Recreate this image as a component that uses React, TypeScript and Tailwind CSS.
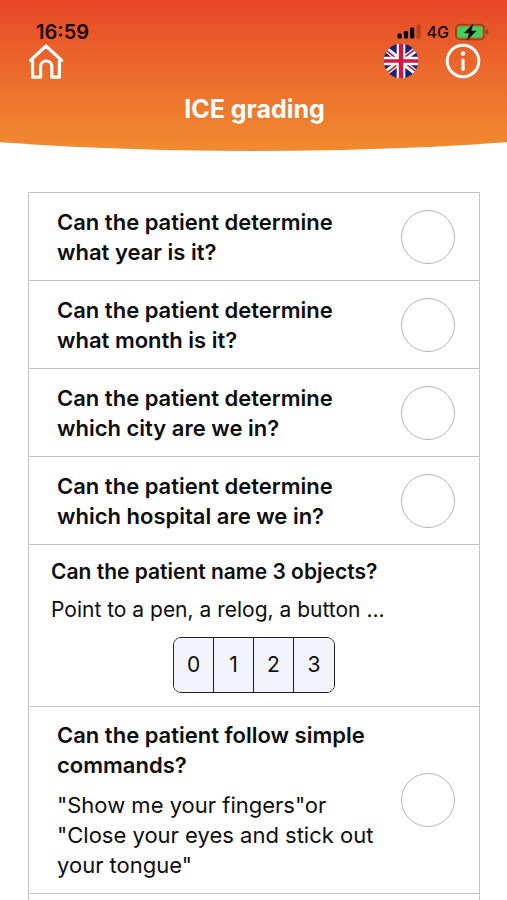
import { useState } from 'react'

/**
 * ICE grading screen
 * ==================
 *
 * Phone status bar, curved header and the list of assessment questions.
 */

interface Question {
    id: string
    title: string
    details?: string[]
    scores?: number[]
}

const QUESTIONS: Question[] = [
    { id: 'year', title: 'Can the patient determine what year is it?' },
    { id: 'month', title: 'Can the patient determine what month is it?' },
    { id: 'city', title: 'Can the patient determine which city are we in?' },
    { id: 'hospital', title: 'Can the patient determine which hospital are we in?' },
    {
        id: 'objects',
        title: 'Can the patient name 3 objects?',
        details: ['Point to a pen, a relog, a button ...'],
        scores: [0, 1, 2, 3],
    },
    {
        id: 'commands',
        title: 'Can the patient follow simple commands?',
        details: ['"Show me your fingers"or', '"Close your eyes and stick out your tongue"'],
    },
]

function HomeIcon() {
    return (
        <svg viewBox="0 0 36 36" className="size-9" fill="none" stroke="currentColor" strokeWidth="3.2" strokeLinecap="round" strokeLinejoin="round">
            <path d="M4.6 17.4H2.4L18 3l15.6 14.4h-2.2V34.2h-7.6V23.6a5.6 5.6 0 0 0-11.2 0v10.6h-8z" />
        </svg>
    )
}

function FlagIcon() {
    return (
        <svg viewBox="0 0 36 36" className="size-9">
            <defs>
                <clipPath id="flag-disc">
                    <circle cx="18" cy="18" r="17.3" />
                </clipPath>
            </defs>
            <g clipPath="url(#flag-disc)">
                <path fill="#14247a" d="M0 0h36v36H0z" />
                <path stroke="#fff" strokeWidth="5.4" d="M0 4l36 28M36 4 0 32" />
                <path stroke="#d3173c" strokeWidth="1.7" d="M-1 4.2 18 19M37 31.8 18 17M37 2.4 18 17.2M-1 33.6 18 18.8" />
                <path stroke="#fff" strokeWidth="8.6" d="M18 0v36M0 18h36" />
                <path stroke="#d3173c" strokeWidth="4.4" d="M18 0v36" />
                <path stroke="#d3173c" strokeWidth="3.6" d="M0 18h36" />
            </g>
        </svg>
    )
}

function InfoIcon() {
    return (
        <svg viewBox="0 0 36 36" className="size-9" fill="none" stroke="currentColor" strokeLinecap="round">
            <circle cx="18" cy="18" r="15.8" strokeWidth="3" />
            <path strokeWidth="3.2" d="M18 17v9.4" />
            <circle cx="18" cy="10.6" r="2.3" fill="currentColor" stroke="none" />
        </svg>
    )
}

function SignalIcon() {
    return (
        <svg viewBox="0 0 24 16" className="h-4 w-6">
            <rect x="0.5" y="9.5" width="4.2" height="5" rx="1.2" />
            <rect x="6.9" y="7" width="4.2" height="7.5" rx="1.2" />
            <rect x="13.1" y="3.6" width="4.2" height="10.9" rx="1.2" />
            <rect x="19.5" y="0.5" width="4.2" height="14" rx="1.2" opacity="0.22" />
        </svg>
    )
}

function BatteryIcon() {
    return (
        <svg viewBox="0 0 34 18" className="h-[18px] w-[34px]">
            <rect x="0.9" y="1.6" width="28.4" height="14.8" rx="4" fill="none" stroke="#8a4a16" strokeWidth="1.6" />
            <rect x="2.8" y="3.5" width="24.6" height="11" rx="2" fill="#3fcf5e" />
            <path fill="#8a4a16" d="M31 6.2c1.6.5 2.4 1.5 2.4 2.8s-.8 2.3-2.4 2.8z" />
            <path fill="#160a04" stroke="#160a04" strokeWidth="0.6" strokeLinejoin="round" d="M17.8 1.2 9.4 9.9h5L12.4 16.9 21 8.1h-5z" />
        </svg>
    )
}

function Header() {
    return (
        <header className="bg-linear-to-b from-[#e64627] to-[#f08b30] pt-[22px] pr-[26px] pb-[27px] pl-7 [clip-path:ellipse(150%_100%_at_50%_0)]">
            {/* Phone status bar */}
            <div className="flex h-5 items-center justify-between pl-2 text-[#140503]">
                <span className="text-xl leading-5 font-semibold">16:59</span>
                <div className="-mr-2 flex items-center gap-1.5">
                    <SignalIcon />
                    <span className="text-base leading-5 font-medium">4G</span>
                    <BatteryIcon />
                </div>
            </div>

            {/* Navigation */}
            <nav className="mt-px flex items-center justify-between text-white">
                <button type="button" aria-label="Home">
                    <HomeIcon />
                </button>
                <div className="flex items-center gap-[26px]">
                    <button type="button" aria-label="Language">
                        <FlagIcon />
                    </button>
                    <button type="button" aria-label="Information">
                        <InfoIcon />
                    </button>
                </div>
            </nav>

            <h1 className="mt-[15px] text-center text-[25px] leading-[30px] font-bold text-white">ICE grading</h1>
        </header>
    )
}

function CheckRow({ question }: { question: Question }) {
    return (
        <li className="border-b border-[#c2c3c5]">
            <label htmlFor={question.id} className="flex min-h-[87px] items-center justify-between py-[13px] pr-6 pl-7">
                <span className="w-80">
                    <span className="block font-semibold">{question.title}</span>
                    {question.details && (
                        <span className="mt-[10px] block">
                            {question.details.map((line) => (
                                <span key={line} className="block">{line}</span>
                            ))}
                        </span>
                    )}
                </span>
                <input
                    id={question.id}
                    type="checkbox"
                    className="size-[54px] shrink-0 appearance-none rounded-full border border-[#b4b5b7] checked:bg-[#f08b30]"
                />
            </label>
        </li>
    )
}

function ScoreRow({ question }: { question: Question }) {
    const [score, setScore] = useState<number | null>(null)

    return (
        <li className="border-b border-[#c2c3c5] px-[22px] pt-3 pb-[13px] text-[21px] leading-[30px]">
            <h2 className="font-semibold">{question.title}</h2>
            {question.details?.map((line) => (
                <p key={line} className="mt-2">{line}</p>
            ))}
            <div className="mt-3 flex justify-center">
                <div className="flex divide-x divide-[#1f2022] overflow-hidden rounded-lg border border-[#1f2022]">
                    {question.scores?.map((value) => (
                        <button
                            key={value}
                            type="button"
                            aria-pressed={score === value}
                            onClick={() => setScore(value)}
                            className="h-[54px] w-10 bg-[#f2f4fa] aria-pressed:bg-[#f08b30]"
                        >
                            {value}
                        </button>
                    ))}
                </div>
            </div>
        </li>
    )
}

export default function App() {
    return (
        <div className="flex min-h-screen flex-col bg-white font-['Inter',sans-serif] text-[#0d0d0e]">
            <Header />
            <main className="mt-[41px] mr-[27px] ml-7 flex grow flex-col">
                <ul className="grow border-x border-t border-[#c2c3c5] text-[22px] leading-[30px]">
                    {QUESTIONS.map((question) =>
                        question.scores ? (
                            <ScoreRow key={question.id} question={question} />
                        ) : (
                            <CheckRow key={question.id} question={question} />
                        ),
                    )}
                </ul>
            </main>
        </div>
    )
}
